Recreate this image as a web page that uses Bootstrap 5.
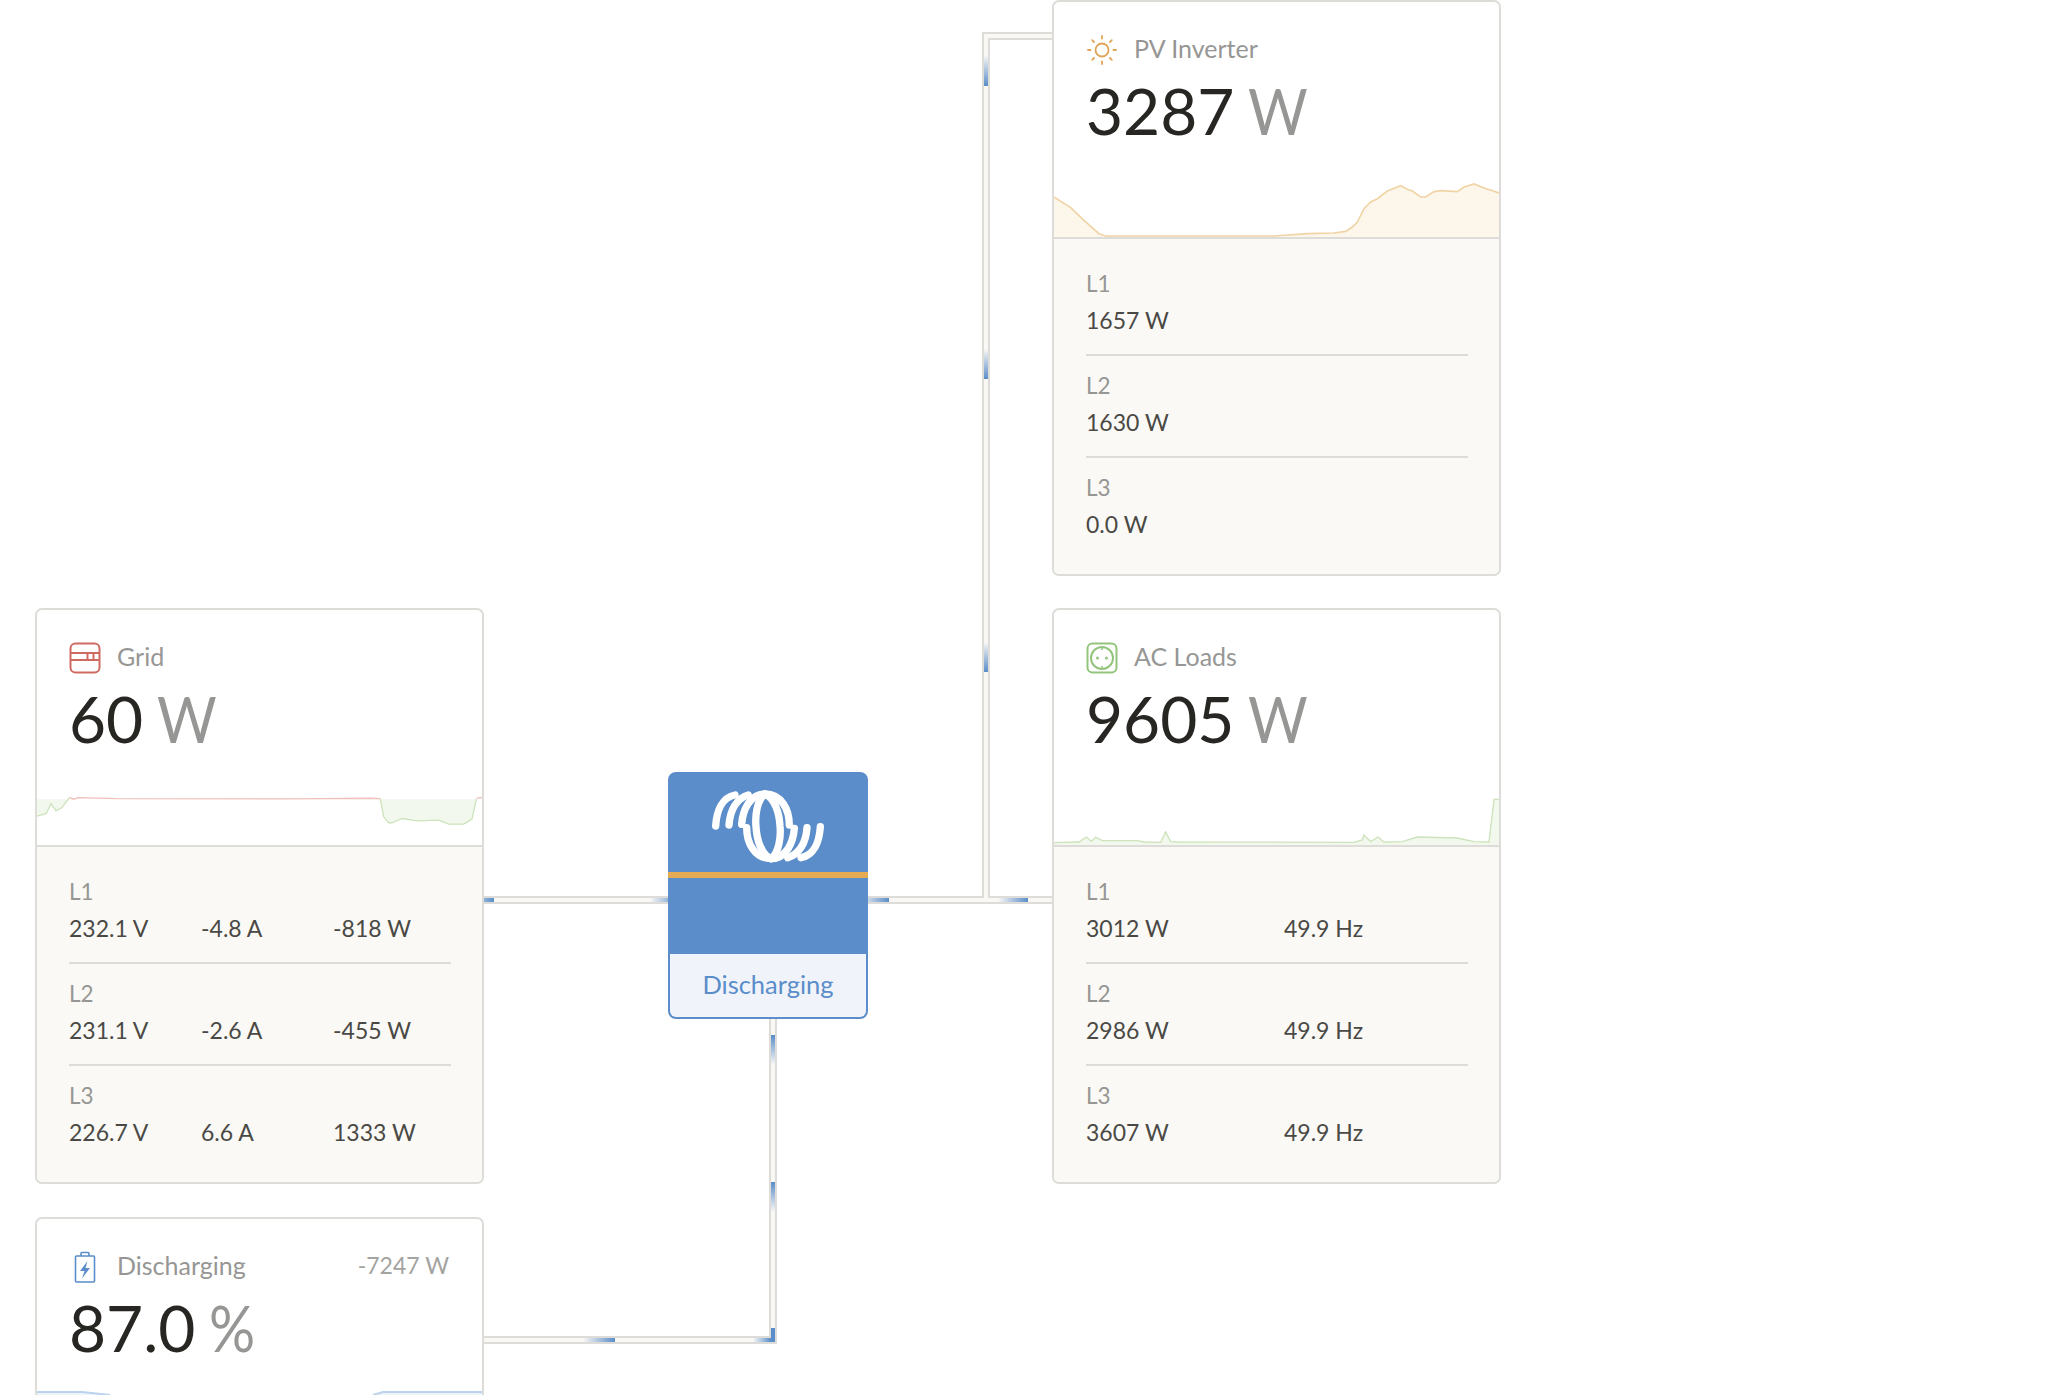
<!DOCTYPE html>
<html lang="en"><head><meta charset="utf-8"><title>Energy flow</title>
<link href="https://cdn.jsdelivr.net/npm/bootstrap@5.3.0/dist/css/bootstrap.min.css" rel="stylesheet">
<style>
html,body{margin:0;background:#fff;overflow:hidden;height:1395px}
body{font-family:Lato,"Liberation Sans",sans-serif;color:#272622}
.canvas{position:relative;width:2047px;height:1395px;overflow:hidden}
.wires{position:absolute;left:0;top:0}
.node{position:absolute;width:449px;height:576px;border:2px solid #dddcd8;border-radius:7px;overflow:hidden;background:#fff}
.n-pv{left:1052px;top:0}.n-grid{left:35px;top:608px}.n-ac{left:1052px;top:608px}.n-bat{left:35px;top:1217px}
.n-head{height:235px;padding:32px 0 0 0}
.n-title{height:32px;padding:0 33px 0 32px;font-size:25px;line-height:32px;color:#969694}
.n-title svg{width:32px;height:32px;margin-right:16px;flex:none}
.n-title span{padding-bottom:5px}
.n-side{margin-left:auto;font-size:23px;color:#a3a3a1}
.n-big{padding-left:32px;margin-top:12px;font-size:64px;line-height:66px;color:#272622}
.n-big span{color:#969694;display:inline-block;margin-left:-3px;transform:scaleX(.9);transform-origin:left center}
.spark{display:block;width:445px;margin-top:auto}
.n-foot{background:#faf9f5;border-top:2px solid #dddcd8;padding:15px 31px 0 32px;flex:1}
.ph{padding:12px 0 16px;border-bottom:2px solid #dddcd8;font-size:23px;line-height:36px}
.ph:last-child{border-bottom:0}
.ph-l{color:#969694;font-size:22.5px}
.ph-v{display:grid;color:#4a4945}
.c3{grid-template-columns:132px 132px 132px}
.c2{grid-template-columns:198px 198px}
.inv{position:absolute;left:668px;top:772px;width:200px;height:247px;background:#5a8dc9;border-radius:8px;overflow:hidden;border:0}
.inv-top{height:100px}
.inv-top svg{width:140px;height:100px;margin-left:32px;display:block;margin-top:8px}
.inv-bar{height:6px;background:#e6aa52}
.inv-mid{height:76px}
.inv-foot{height:63px;margin:0 2px 2px;background:#f0f4fa;border-radius:0 0 6px 6px;color:#5a8dc9;font-size:25.5px;line-height:60px;text-align:center}
</style></head>
<body>
<div class="canvas">
<svg class="wires" width="2047" height="1395" viewBox="0 0 2047 1395">
<defs>
<linearGradient id="gU" x1="0" y1="0" x2="0" y2="1"><stop offset="0" stop-color="#5a8dc9" stop-opacity="0"/><stop offset="1" stop-color="#5a8dc9"/></linearGradient>
<linearGradient id="gD" x1="0" y1="0" x2="0" y2="1"><stop offset="0" stop-color="#5a8dc9"/><stop offset="1" stop-color="#5a8dc9" stop-opacity="0"/></linearGradient>
<linearGradient id="gR" x1="0" y1="0" x2="1" y2="0"><stop offset="0" stop-color="#5a8dc9" stop-opacity="0"/><stop offset="1" stop-color="#5a8dc9"/></linearGradient>
</defs>
<g fill="#dddcd8">
<rect x="484" y="896" width="184" height="8"/>
<rect x="868" y="896" width="186" height="8"/>
<rect x="982" y="32" width="8" height="872"/>
<rect x="982" y="32" width="72" height="8"/>
<rect x="769" y="1019" width="8" height="325"/>
<rect x="484" y="1336" width="293" height="8"/>
</g>
<g fill="#faf8f5">
<rect x="484" y="898" width="184" height="4"/>
<rect x="868" y="898" width="186" height="4"/>
<rect x="984" y="34" width="4" height="868"/>
<rect x="984" y="34" width="70" height="4"/>
<rect x="771" y="1019" width="4" height="323"/>
<rect x="484" y="1338" width="291" height="4"/>
</g>
<rect x="464" y="898" width="30" height="4" fill="url(#gR)"/>
<rect x="650" y="898" width="30" height="4" fill="url(#gR)"/>
<rect x="859" y="898" width="30" height="4" fill="url(#gR)"/>
<rect x="998" y="898" width="30" height="4" fill="url(#gR)"/>
<rect x="984" y="55" width="4" height="31" fill="url(#gU)"/>
<rect x="984" y="349" width="4" height="30" fill="url(#gU)"/>
<rect x="984" y="642" width="4" height="30" fill="url(#gU)"/>
<rect x="771" y="1035" width="4" height="30" fill="url(#gD)"/>
<rect x="771" y="1182" width="4" height="30" fill="url(#gD)"/>
<rect x="771" y="1328" width="4" height="14" fill="#5a8dc9"/>
<rect x="583" y="1338" width="32" height="4" fill="url(#gR)"/>
<rect x="753" y="1338" width="18" height="4" fill="url(#gR)"/>
</svg>

<div class="node n-pv card d-flex flex-column">
 <div class="n-head d-flex flex-column">
  <div class="n-title d-flex align-items-center">
   <svg viewBox="0 0 32 32" fill="none" stroke="#e0a357" stroke-width="1.800" stroke-linecap="round"><circle cx="16" cy="16" r="6.500"/><path d="M16 2v2.500M16 27.500V30M2 16h2.500M27.500 16H30M6.200 6.200l1.800 1.800M24 24l1.800 1.800M6.200 25.800l1.800-1.800M24 8l1.800-1.800"/></svg>
   <span>PV Inverter</span>
  </div>
  <div class="n-big">3287 <span>W</span></div>
  <svg class="spark" height="60" viewBox="0 0 1335 180" preserveAspectRatio="none"><path d="M0 60 50 92 90 130 135 170 155 177 660 177 760 170 840 168 875 163 895 150 910 135 930 95 950 75 970 65 1000 42 1040 26 1060 37 1075 42 1100 60 1115 60 1140 44 1160 41 1210 44 1230 30 1260 21 1290 33 1335 48V180H0Z" fill="#fdf6ea"/><path d="M0 60 50 92 90 130 135 170 155 177 660 177 760 170 840 168 875 163 895 150 910 135 930 95 950 75 970 65 1000 42 1040 26 1060 37 1075 42 1100 60 1115 60 1140 44 1160 41 1210 44 1230 30 1260 21 1290 33 1335 48" fill="none" stroke="#f0d4a6" stroke-width="5"/></svg>
 </div>
 <div class="n-foot">
  <div class="ph"><div class="ph-l">L1</div><div class="ph-v c2"><span>1657 W</span></div></div>
  <div class="ph"><div class="ph-l">L2</div><div class="ph-v c2"><span>1630 W</span></div></div>
  <div class="ph"><div class="ph-l">L3</div><div class="ph-v c2"><span>0.0 W</span></div></div>
 </div>
</div>

<div class="node n-grid card d-flex flex-column">
 <div class="n-head d-flex flex-column">
  <div class="n-title d-flex align-items-center">
   <svg viewBox="0 0 32 32" fill="none" stroke="#cf6a62" stroke-width="2"><rect x="1.500" y="1.500" width="29" height="29" rx="5"/><path d="M1.500 11h29M1.500 18h29M18.500 11v7M24.500 11v7"/></svg>
   <span>Grid</span>
  </div>
  <div class="n-big">60 <span>W</span></div>
  <svg class="spark" height="63" viewBox="0 0 1335 190" preserveAspectRatio="none"><path d="M0 52V103L28 95 42 65 57 87 75 77 97 52ZM1030 52 1040 105 1055 123 1065 123 1095 110 1140 117 1205 115 1235 127 1280 127 1305 112 1318 52Z" fill="#f3f8ee"/><path d="M0 103 28 95 42 65 57 87 75 77 97 47" fill="none" stroke="#cde3bb" stroke-width="4"/><path d="M97 47 110 52 125 47 240 50 760 51 1000 49 1030 50" fill="none" stroke="#f0c0bc" stroke-width="4"/><path d="M1030 50 1040 105 1055 123 1065 123 1095 110 1140 117 1205 115 1235 127 1280 127 1305 112 1318 52" fill="none" stroke="#cde3bb" stroke-width="4"/><path d="M1318 50 1325 47H1335" fill="none" stroke="#f0c0bc" stroke-width="4"/></svg>
 </div>
 <div class="n-foot">
  <div class="ph"><div class="ph-l">L1</div><div class="ph-v c3"><span>232.1 V</span><span>-4.8 A</span><span>-818 W</span></div></div>
  <div class="ph"><div class="ph-l">L2</div><div class="ph-v c3"><span>231.1 V</span><span>-2.6 A</span><span>-455 W</span></div></div>
  <div class="ph"><div class="ph-l">L3</div><div class="ph-v c3"><span>226.7 V</span><span>6.6 A</span><span>1333 W</span></div></div>
 </div>
</div>

<div class="node n-ac card d-flex flex-column">
 <div class="n-head d-flex flex-column">
  <div class="n-title d-flex align-items-center">
   <svg viewBox="0 0 32 32" fill="none" stroke="#93c47d" stroke-width="2"><rect x="1.500" y="1.500" width="29" height="29" rx="5"/><circle cx="16" cy="16" r="11"/><path d="M16 5v3M16 24v3" stroke-width="1.500"/><circle cx="11.500" cy="16" r="1.500" fill="#93c47d" stroke="none"/><circle cx="20.500" cy="16" r="1.500" fill="#93c47d" stroke="none"/></svg>
   <span>AC Loads</span>
  </div>
  <div class="n-big">9605 <span>W</span></div>
  <svg class="spark" height="60" viewBox="0 -43 1335 180" preserveAspectRatio="none"><path d="M0 130 75 128 97 113 112 126 125 114 145 124 250 124 270 128 320 129 335 98 350 127 370 128 900 129 925 122 930 107 950 127 972 113 990 128 1045 127 1090 113 1210 116 1260 127 1305 128 1320 0H1335V180H0Z" fill="#f3f8ee"/><path d="M0 130 75 128 97 113 112 126 125 114 145 124 250 124 270 128 320 129 335 98 350 127 370 128 900 129 925 122 930 107 950 127 972 113 990 128 1045 127 1090 113 1210 116 1260 127 1305 128 1320 0H1335" fill="none" stroke="#cde3bb" stroke-width="4"/></svg>
 </div>
 <div class="n-foot">
  <div class="ph"><div class="ph-l">L1</div><div class="ph-v c2"><span>3012 W</span><span>49.9 Hz</span></div></div>
  <div class="ph"><div class="ph-l">L2</div><div class="ph-v c2"><span>2986 W</span><span>49.9 Hz</span></div></div>
  <div class="ph"><div class="ph-l">L3</div><div class="ph-v c2"><span>3607 W</span><span>49.9 Hz</span></div></div>
 </div>
</div>

<div class="node n-bat card d-flex flex-column">
 <div class="n-head d-flex flex-column">
  <div class="n-title d-flex align-items-center">
   <svg viewBox="0 0 32 32" fill="none" stroke="#5a8dc9" stroke-width="1.600"><path d="M7.500 5h17a1 1 0 0 1 1 1v24a1 1 0 0 1-1 1h-17a1 1 0 0 1-1-1V6a1 1 0 0 1 1-1ZM12 5V2.500a1 1 0 0 1 1-1h6a1 1 0 0 1 1 1V5"/><path d="M18.500 10 11 20h4.500l-2.500 7.500L21 17h-4.500Z" fill="#5a8dc9" stroke="none"/></svg>
   <span>Discharging</span>
   <span class="n-side">-7247 W</span>
  </div>
  <div class="n-big">87.0 <span>%</span></div>
  <svg class="spark" height="63" viewBox="0 0 445 63" preserveAspectRatio="none"><path d="M0 1H45L73 4V63H0ZM336 63V4L346 1H445V63Z" fill="#eef3fa"/><path d="M0 1H45L73 4M336 4 346 1H445" fill="none" stroke="#bcd2ec" stroke-width="2"/></svg>
 </div>
</div>

<div class="inv card">
 <div class="inv-top">
  <svg viewBox="0 0 420 300" fill="none" stroke="#fff" stroke-width="22" stroke-linecap="round">
   <path d="M47 138C50 90 68 52 105 45"/><path d="M87 135C90 90 110 55 145 45"/><path d="M125 133C128 90 150 42 195 42C245 42 268 90 268 135"/>
   <path d="M361 140C358 188 340 226 303 233"/><path d="M321 143C318 188 298 223 263 233"/><path d="M283 145C280 188 258 236 213 236C163 236 140 188 140 143"/>
   <path d="M195 42C170 60 165 110 168 140C170 180 185 225 213 236"/><path d="M213 236C238 218 243 168 240 138C238 98 223 53 195 42"/>
  </svg>
 </div>
 <div class="inv-bar"></div>
 <div class="inv-mid"></div>
 <div class="inv-foot">Discharging</div>
</div>
</div>
<script src="https://cdn.jsdelivr.net/npm/bootstrap@5.3.0/dist/js/bootstrap.bundle.min.js"></script>
</body></html>
